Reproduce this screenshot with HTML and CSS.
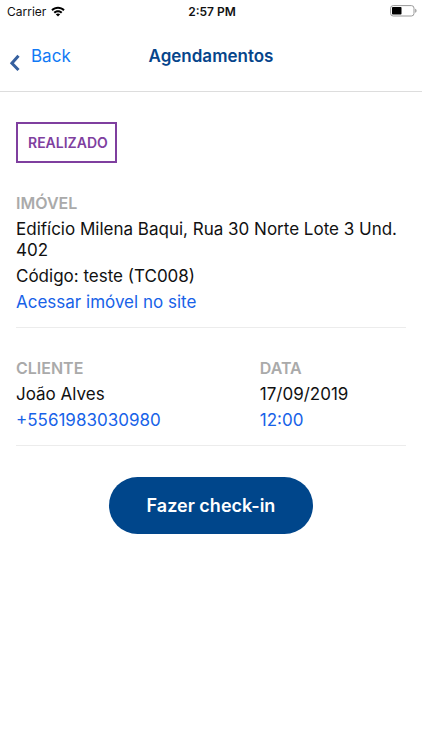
FILE: index.html
```html
<!DOCTYPE html>
<html lang="pt-BR">
<head>
<meta charset="utf-8">
<meta name="viewport" content="width=device-width, initial-scale=1">
<title>Agendamentos</title>
<link rel="stylesheet" href="styles.css">
</head>
<body>
<div class="status-bar">
  <div class="carrier">
    <span>Carrier</span>
    <svg class="wifi" viewBox="0 0 14 11" aria-hidden="true">
      <path d="M0.3 3.6C4.1-0.2 9.9-0.2 13.7 3.6L12.3 5.1C9.2 2.1 4.8 2.1 1.7 5.1Z"/>
      <path d="M2.6 6C5.1 3.6 8.9 3.6 11.4 6L10 7.4C8.3 5.8 5.7 5.8 4 7.4Z"/>
      <path d="M4.8 8.2C6.1 7.1 7.9 7.1 9.2 8.2L7 10.5Z"/>
    </svg>
  </div>
  <span class="time">2:57 PM</span>
  <svg class="battery" viewBox="0 0 27 12" aria-hidden="true">
    <rect class="battery-case" x="0.6" y="0.6" width="23.4" height="10.4" rx="2.6"/>
    <rect x="2" y="2" width="9.5" height="7.6" rx="0.8"/>
    <path class="battery-tip" d="M25.2 3.8C27 4.2 27 7.4 25.2 7.8Z"/>
  </svg>
</div>
<header class="nav">
  <a class="back" href="#">
    <svg class="chevron" viewBox="0 0 12 18" aria-hidden="true"><path d="M10 1.8 3.4 9.2 10 16"/></svg>
    <span>Back</span>
  </a>
  <h1 class="title">Agendamentos</h1>
</header>
<main class="content">
  <span class="tag">REALIZADO</span>
  <section class="section">
    <h2 class="label">IMÓVEL</h2>
    <p>Edifício Milena Baqui, Rua 30 Norte Lote 3 Und. 402</p>
    <p>Código: teste (TC008)</p>
    <a class="link" href="#">Acessar imóvel no site</a>
  </section>
  <div class="columns">
    <section class="section">
      <h2 class="label">CLIENTE</h2>
      <p>João Alves</p>
      <a class="link" href="tel:+5561983030980">+5561983030980</a>
    </section>
    <section class="section">
      <h2 class="label">DATA</h2>
      <p>17/09/2019</p>
      <a class="link" href="#">12:00</a>
    </section>
  </div>
  <button class="checkin" type="button">Fazer check-in</button>
</main>
</body>
</html>
```
FILE: styles.css
```css
* {
  box-sizing: border-box;
}

body {
  margin: 0;
  background: #fff;
  color: #111;
  font-family: Inter, "Liberation Sans", sans-serif;
  font-size: 17px;
  line-height: 21px;
}

h1, h2, p {
  margin: 0;
}

a {
  text-decoration: none;
}

.status-bar {
  display: grid;
  grid-template-columns: 1fr auto 1fr;
  align-items: center;
  height: 22px;
  padding: 0 5px 0 7px;
  font-size: 12px;
}

.carrier {
  display: flex;
  align-items: center;
  gap: 5px;
}

.wifi {
  width: 14px;
  height: 11px;
}

.time {
  font-weight: 600;
}

.battery {
  width: 27px;
  height: 12px;
  justify-self: end;
}

.battery-case {
  fill: none;
  stroke: #999;
}

.battery-tip {
  fill: #999;
}

.nav {
  display: grid;
  grid-template-columns: 1fr auto 1fr;
  align-items: start;
  height: 70px;
  padding: 24px 8px 0;
  border-bottom: 1px solid #ddd;
}

.back {
  display: flex;
  gap: 10px;
  color: #117af5;
}

.chevron {
  width: 13px;
  height: 18px;
  margin-top: 8px;
  fill: none;
  stroke: #36609f;
  stroke-width: 3;
}

.title {
  color: #06458b;
  font-size: 17px;
  font-weight: 600;
}

.content {
  display: flex;
  flex-direction: column;
  padding: 30px 16px;
}

.tag {
  align-self: flex-start;
  padding: 8px 7px 8px 10px;
  border: 2px solid #7f3f9f;
  color: #7f3f9f;
  font-size: 14px;
  font-weight: 600;
}

.section {
  display: flex;
  flex-direction: column;
  align-items: flex-start;
  gap: 5px;
}

.content > .section,
.columns {
  padding: 30px 0 14px;
  border-bottom: 1px solid #ececec;
}

.label {
  color: #aaa;
  font-size: 16px;
  font-weight: 600;
}

.link {
  color: #1762e8;
}

.columns {
  display: grid;
  grid-template-columns: 5fr 3fr;
}

.checkin {
  align-self: center;
  margin-top: 31px;
  padding: 18px 38px;
  border: 0;
  border-radius: 29px;
  background: #00468b;
  color: #fff;
  font: inherit;
  font-size: 18px;
  font-weight: 600;
}
```
